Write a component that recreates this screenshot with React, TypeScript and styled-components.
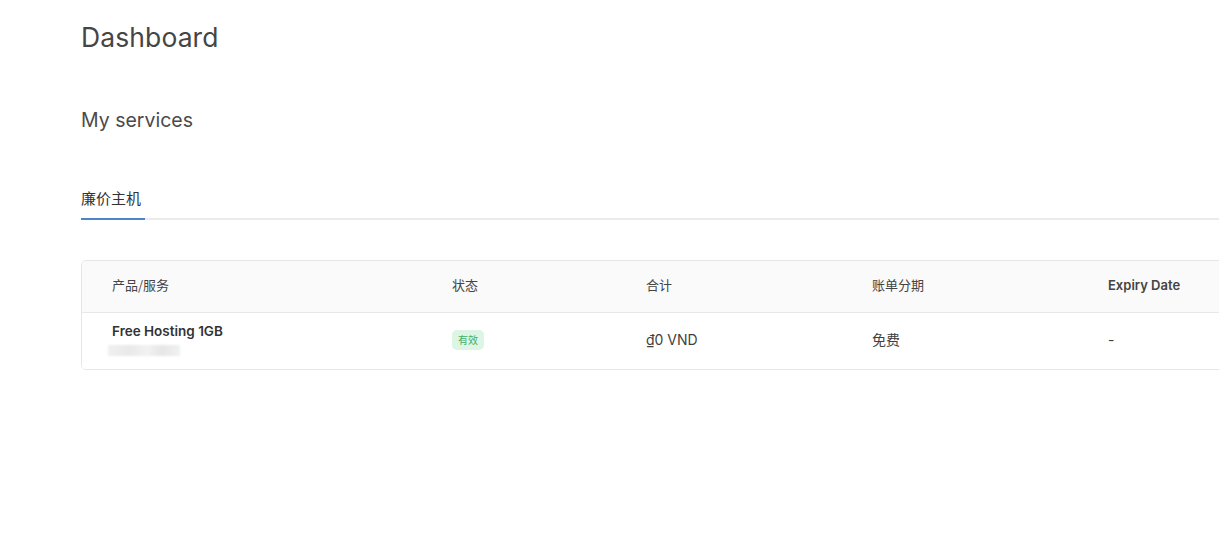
import React from 'react';
import styled, { createGlobalStyle } from 'styled-components';

const GlobalStyle = createGlobalStyle`
  html, body {
    margin: 0;
    padding: 0;
    background: #ffffff;
    overflow: hidden;
  }
  body {
    font-family: Inter, "Noto Sans", "Noto Sans CJK SC", sans-serif;
    color: #444;
  }
`;

const Page = styled.div`
  width: 1219px;
  height: 556px;
  overflow: hidden;
  padding: 19px 0 0 81px;
  box-sizing: border-box;
`;

const Content = styled.div`
  margin-right: -20px;
`;

const Title = styled.h1`
  margin: 0;
  font-size: 26.5px;
  font-weight: 400;
  line-height: 36px;
  color: #454545;
  letter-spacing: 0.1px;
`;

const SectionTitle = styled.h2`
  margin: 51px 0 0;
  font-size: 19.5px;
  font-weight: 400;
  line-height: 28px;
  color: #4a4a4a;
`;

const Tabs = styled.div`
  display: flex;
  margin-top: 54px;
  border-bottom: 2px solid #ebebeb;
`;

const Tab = styled.div<{ $active?: boolean }>`
  font-family: "Noto Sans CJK SC", sans-serif;
  font-size: 15px;
  line-height: 20px;
  padding: 0 0 10px;
  width: 64px;
  color: #333;
  margin-bottom: -2px;
  border-bottom: 2px solid ${p => (p.$active ? '#4a86c8' : 'transparent')};
`;

const Card = styled.div`
  margin-top: 40px;
  border: 1px solid #e6e6e6;
  border-radius: 5px;
  overflow: hidden;
`;

const Row = styled.div<{ $head?: boolean }>`
  display: grid;
  grid-template-columns: 340px 194px 226px 236px 1fr;
  align-items: center;
  box-sizing: border-box;
  height: ${p => (p.$head ? '52px' : '56px')};
  padding-bottom: 4px;
  background: ${p => (p.$head ? '#fafafa' : '#ffffff')};
  border-bottom: ${p => (p.$head ? '1px solid #e8e8e8' : 'none')};
`;

const Cell = styled.div<{ $latin?: boolean; $bold?: boolean }>`
  padding-left: 30px;
  font-family: ${p => (p.$latin ? 'Inter, "Noto Sans", sans-serif' : '"Noto Sans CJK SC", sans-serif')};
  font-size: 13px;
  font-weight: ${p => (p.$bold ? 600 : 400)};
  color: #444;
`;

const BodyCell = styled(Cell)`
  font-size: 14px;
  color: #3f3f3f;
`;

const ProductName = styled.div`
  font-family: Inter, "Noto Sans", sans-serif;
  font-size: 13.5px;
  font-weight: 600;
  color: #333;
  line-height: 18px;
  margin-top: -1px;
`;

const Blurred = styled.div`
  margin: 5px 0 0 -4px;
  width: 72px;
  height: 11px;
  background: linear-gradient(90deg, #f0f0f0 0%, #e9e9e9 30%, #f2f2f2 55%, #e6e6e6 75%, #f1f1f1 100%);
  filter: blur(1px);
`;

const Badge = styled.span`
  display: inline-block;
  font-family: "Noto Sans CJK SC", sans-serif;
  font-size: 10px;
  line-height: 20px;
  padding: 0 6px;
  border-radius: 5px;
  background: #dcf5e5;
  color: #3cae6b;
`;

export default function App() {
  return (
    <>
      <GlobalStyle />
      <Page>
        <Title>Dashboard</Title>
        <SectionTitle>My services</SectionTitle>
        <Content>
          <Tabs>
            <Tab $active>廉价主机</Tab>
          </Tabs>
          <Card>
            <Row $head>
              <Cell>产品/服务</Cell>
              <Cell>状态</Cell>
              <Cell>合计</Cell>
              <Cell>账单分期</Cell>
              <Cell $latin $bold>Expiry Date</Cell>
            </Row>
            <Row>
              <BodyCell>
                <ProductName>Free Hosting 1GB</ProductName>
                <Blurred />
              </BodyCell>
              <BodyCell>
                <Badge>有效</Badge>
              </BodyCell>
              <BodyCell $latin>₫0 VND</BodyCell>
              <BodyCell>免费</BodyCell>
              <BodyCell $latin>-</BodyCell>
            </Row>
          </Card>
        </Content>
      </Page>
    </>
  );
}
